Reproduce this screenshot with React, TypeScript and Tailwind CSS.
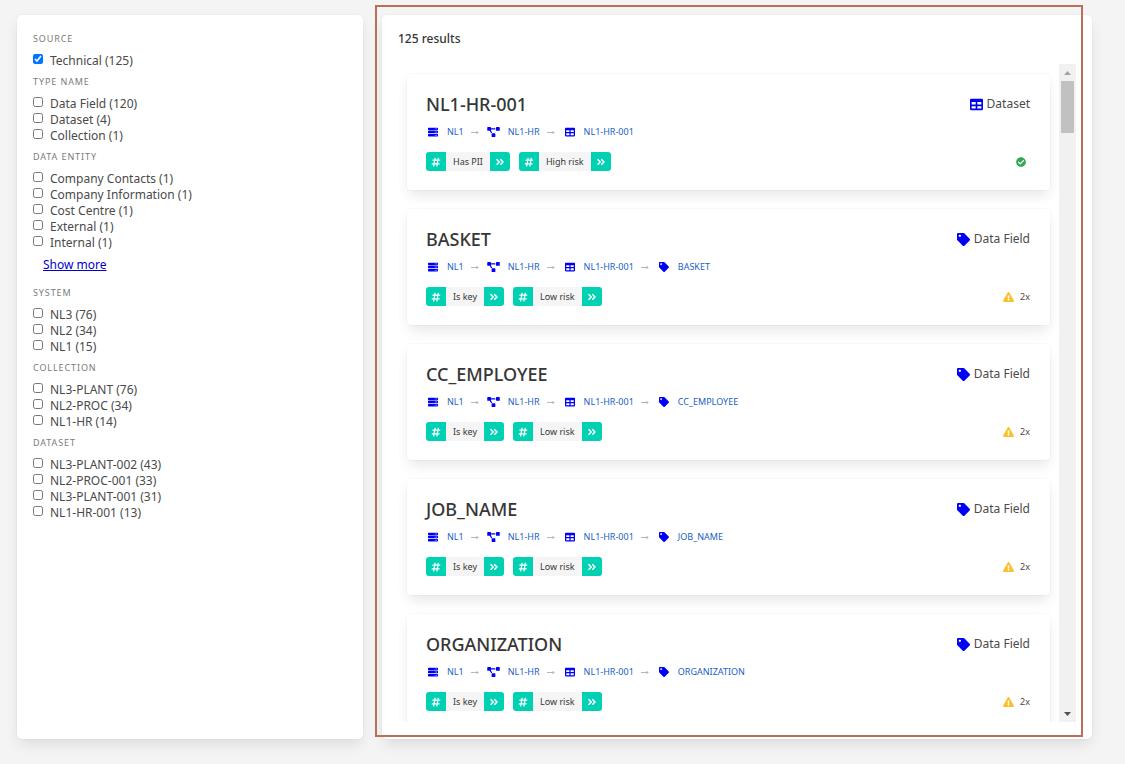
import { useState } from "react";
import {
  FaAngleDoubleRight,
  FaCheckCircle,
  FaExclamationTriangle,
  FaHashtag,
  FaProjectDiagram,
  FaServer,
  FaTable,
  FaTag,
} from "react-icons/fa";

type Facet = { title: string; options: string[]; more?: boolean };

const facets: Facet[] = [
  { title: "Source", options: ["Technical (125)"] },
  { title: "Type name", options: ["Data Field (120)", "Dataset (4)", "Collection (1)"] },
  {
    title: "Data entity",
    options: [
      "Company Contacts (1)",
      "Company Information (1)",
      "Cost Centre (1)",
      "External (1)",
      "Internal (1)",
    ],
    more: true,
  },
  { title: "System", options: ["NL3 (76)", "NL2 (34)", "NL1 (15)"] },
  { title: "Collection", options: ["NL3-PLANT (76)", "NL2-PROC (34)", "NL1-HR (14)"] },
  {
    title: "Dataset",
    options: ["NL3-PLANT-002 (43)", "NL2-PROC-001 (33)", "NL3-PLANT-001 (31)", "NL1-HR-001 (13)"],
  },
];

type Result = { name: string; kind: "Dataset" | "Data Field"; tags: string[]; warnings: number };

const results: Result[] = [
  { name: "NL1-HR-001", kind: "Dataset", tags: ["Has PII", "High risk"], warnings: 0 },
  { name: "BASKET", kind: "Data Field", tags: ["Is key", "Low risk"], warnings: 2 },
  { name: "CC_EMPLOYEE", kind: "Data Field", tags: ["Is key", "Low risk"], warnings: 2 },
  { name: "JOB_NAME", kind: "Data Field", tags: ["Is key", "Low risk"], warnings: 2 },
  { name: "ORGANIZATION", kind: "Data Field", tags: ["Is key", "Low risk"], warnings: 2 },
];

function FacetGroup({ facet }: { facet: Facet }) {
  const [checked, setChecked] = useState<string[]>(facet.title === "Source" ? facet.options : []);
  const toggle = (option: string) =>
    setChecked((all) => (all.includes(option) ? all.filter((o) => o !== option) : [...all, option]));

  return (
    <section>
      <h2 className="flex h-[27px] items-center text-[9px] tracking-widest text-[#7a7a7a] uppercase">
        {facet.title}
      </h2>
      <ul>
        {facet.options.map((option) => (
          <li key={option}>
            <label className="flex h-4 items-start gap-[7px] text-[12px] leading-[18px]">
              <input
                type="checkbox"
                className="mt-0.5 size-2.5 shrink-0 accent-[#0075ff]"
                checked={checked.includes(option)}
                onChange={() => toggle(option)}
              />
              {option}
            </label>
          </li>
        ))}
      </ul>
      {facet.more && (
        <a href="#more" className="ml-2.5 block w-fit text-[12px] leading-[29px] text-[#0000d0] underline">
          Show more
        </a>
      )}
    </section>
  );
}

function Arrow() {
  return (
    <span aria-hidden="true" className="flex w-[23px] justify-center text-[#a5a5a5]">
      <svg viewBox="0 0 8 6" className="h-1.5 w-2" fill="none" stroke="currentColor">
        <path d="M0 3.5h7M5.5 2l1.5 1.5-1.5 1.5" strokeWidth="0.8" />
      </svg>
    </span>
  );
}

function Breadcrumb({ result }: { result: Result }) {
  const crumbs = [
    { label: "NL1", Icon: FaServer, size: "h-2.5 w-2.5" },
    { label: "NL1-HR", Icon: FaProjectDiagram, size: "h-2.5 w-[13px]" },
    { label: "NL1-HR-001", Icon: FaTable, size: "h-2.5 w-2.5" },
  ];
  if (result.kind === "Data Field") {
    crumbs.push({ label: result.name, Icon: FaTag, size: "h-2.5 w-2.5" });
  }

  return (
    <nav aria-label="Breadcrumb">
      <ol className="flex h-3 items-center text-[9px] leading-3">
        {crumbs.map(({ label, Icon, size }, i) => (
          <li key={label} className="flex items-center">
            {i > 0 && <Arrow />}
            <a href="#crumb" className="flex items-center gap-[7px] text-[#2160c4]">
              <span className="flex w-3.5 justify-center text-[#0000f5]">
                <Icon className={size} />
              </span>
              {label}
            </a>
          </li>
        ))}
      </ol>
    </nav>
  );
}

function Tag({ label }: { label: string }) {
  return (
    <li className="flex h-[19px] overflow-hidden rounded-[3px] text-[9px]">
      <span className="flex w-5 items-center justify-center bg-[#00d1b2] text-white">
        <FaHashtag className="size-2.5" />
      </span>
      <span className="flex items-center bg-[#f5f5f5] px-[7px] text-[#363636]">{label}</span>
      <button
        type="button"
        aria-label={`Show results tagged ${label}`}
        className="flex w-5 items-center justify-center bg-[#00d1b2] text-white"
      >
        <FaAngleDoubleRight className="size-2.5" />
      </button>
    </li>
  );
}

function ResultCard({ result }: { result: Result }) {
  const KindIcon = result.kind === "Dataset" ? FaTable : FaTag;
  return (
    <article className="flex justify-between rounded bg-white pt-[18px] pr-5 pb-[19px] pl-[19px] shadow-[0_7px_14px_-2px_rgba(10,10,10,0.1),0_0_0_1px_rgba(10,10,10,0.02)]">
      <div>
        <h3 className="text-[18px] leading-6 font-medium text-[#363636]">{result.name}</h3>
        <div className="mt-2.5">
          <Breadcrumb result={result} />
        </div>
        <ul className="mt-3.5 flex gap-[9px]">
          {result.tags.map((tag) => (
            <Tag key={tag} label={tag} />
          ))}
        </ul>
      </div>
      <div className="flex flex-col items-end justify-between">
        <p className="flex items-center gap-1 text-[12px] leading-6">
          <KindIcon className="size-[13px] text-[#0000f5]" />
          {result.kind}
        </p>
        <p className="flex h-[19px] items-center gap-1.5 text-[9px]">
          {result.warnings > 0 ? (
            <>
              <FaExclamationTriangle className="h-2.5 w-[11px] text-[#fbc02d]" />
              {result.warnings}x
            </>
          ) : (
            <FaCheckCircle aria-label="No warnings" className="mr-1 size-2.5 text-[#2fa84f]" />
          )}
        </p>
      </div>
    </article>
  );
}

function ScrollRail() {
  return (
    <div aria-hidden="true" className="flex w-[17px] shrink-0 flex-col items-center bg-[#f1f1f1]">
      <span className="flex h-[17px] items-center">
        <svg viewBox="0 0 7 4" className="h-1 w-[7px]" fill="#a3a3a3">
          <path d="M3.5 0 7 4H0z" />
        </svg>
      </span>
      <span className="h-[52px] w-[13px] bg-[#c1c1c1]" />
      <span className="mt-auto flex h-[17px] items-center">
        <svg viewBox="0 0 7 4" className="h-1 w-[7px]" fill="#505050">
          <path d="M3.5 4 7 0H0z" />
        </svg>
      </span>
    </div>
  );
}

export default function App() {
  return (
    <div className="grid h-screen grid-cols-[346fr_710fr] gap-[19px] overflow-hidden bg-[#f4f4f4] pt-[15px] pr-[33px] pb-[25px] pl-[17px] font-['Noto_Sans','Open_Sans',sans-serif] text-[#4a4a4a]">
      <aside className="rounded-[5px] bg-white px-4 pt-2.5 shadow-[0_7px_14px_-2px_rgba(10,10,10,0.1),0_0_0_1px_rgba(10,10,10,0.02)]">
        {facets.map((facet) => (
          <FacetGroup key={facet.title} facet={facet} />
        ))}
      </aside>
      <main className="relative flex min-h-0 flex-col rounded-[5px] bg-white px-4 pb-[17px] shadow-[0_7px_14px_-2px_rgba(10,10,10,0.1),0_0_0_1px_rgba(10,10,10,0.02)]">
        <h1 className="mb-px flex h-12 shrink-0 items-center text-[12px] font-medium text-[#363636]">
          125 results
        </h1>
        <div className="flex min-h-0 flex-1">
          <div className="flex flex-1 flex-col gap-[19px] overflow-y-auto px-[9px] pt-2.5 [scrollbar-width:none]">
            {results.map((result) => (
              <ResultCard key={result.name} result={result} />
            ))}
          </div>
          <ScrollRail />
        </div>
        <div className="pointer-events-none absolute -top-2.5 right-[9px] bottom-0.5 -left-[7px] border-2 border-[#bb6f58]" />
      </main>
    </div>
  );
}
